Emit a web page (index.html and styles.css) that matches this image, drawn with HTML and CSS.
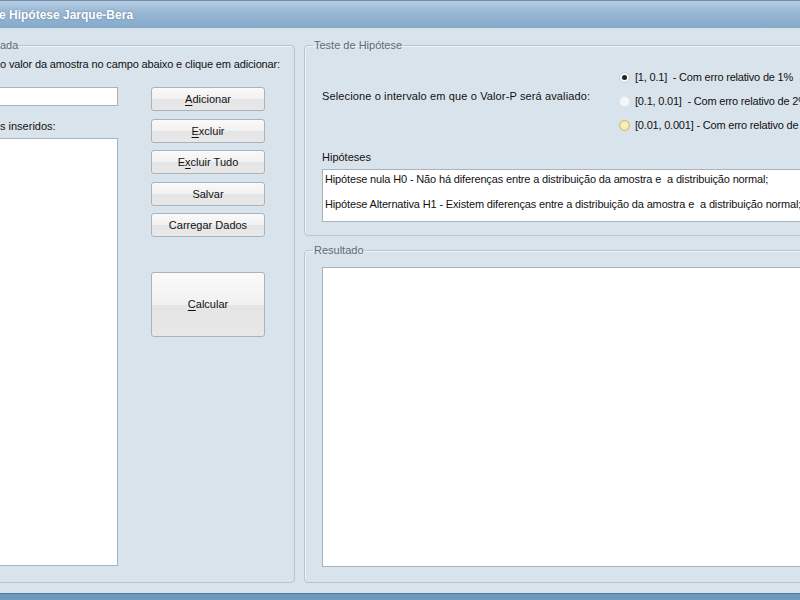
FILE: index.html
```html
<!DOCTYPE html>
<html lang="pt">
<head>
<meta charset="utf-8">
<title>Teste de Hipótese Jarque-Bera</title>
<link rel="stylesheet" href="styles.css">
</head>
<body>
<div class="window">
  <div class="titlebar"><span class="title">e Hipótese Jarque-Bera</span></div>
  <div class="client">
    <fieldset class="group group-left">
      <legend>ada</legend>
      <p class="instr">o valor da amostra no campo abaixo e clique em adicionar:</p>
      <div class="left-body">
        <div class="col-inputs">
          <div class="textbox small"></div>
          <div class="lbl list-label">s inseridos:</div>
          <div class="listbox"></div>
        </div>
        <div class="col-buttons">
          <button class="btn"><u>A</u>dicionar</button>
          <button class="btn"><u>E</u>xcluir</button>
          <button class="btn">E<u>x</u>cluir Tudo</button>
          <button class="btn">Salvar</button>
          <button class="btn">Carregar Dados</button>
          <button class="btn big"><u>C</u>alcular</button>
        </div>
      </div>
    </fieldset>
    <div class="col-right">
      <fieldset class="group group-test">
        <legend>Teste de Hipótese</legend>
        <div class="interval-row">
          <div class="interval-label">Selecione o intervalo em que o Valor-P será avaliado:</div>
          <div class="radios">
            <div class="radio-row"><span class="radio checked"></span><span>[1, 0.1]&nbsp; - Com erro relativo de 1%</span></div>
            <div class="radio-row"><span class="radio faint"></span><span>[0.1, 0.01]&nbsp; - Com erro relativo de 2%</span></div>
            <div class="radio-row"><span class="radio hover"></span><span>[0.01, 0.001] - Com erro relativo de 3%</span></div>
          </div>
        </div>
        <div class="lbl hyp-label">Hipóteses</div>
        <div class="textbox hyp">
          <p>Hipótese nula H0 - Não há diferenças entre a distribuição da amostra e&nbsp; a distribuição normal;</p>
          <p>Hipótese Alternativa H1 - Existem diferenças entre a distribuição da amostra e&nbsp; a distribuição normal;</p>
        </div>
      </fieldset>
      <fieldset class="group group-result">
        <legend>Resultado</legend>
        <div class="textbox result"></div>
      </fieldset>
    </div>
  </div>
  <div class="statusbar"></div>
</div>
</body>
</html>
```

FILE: styles.css
```css
html, body {
  margin: 0;
  padding: 0;
  width: 800px;
  height: 600px;
  overflow: hidden;
}
body {
  font-family: "Liberation Sans", Arial, sans-serif;
  font-size: 11px;
  color: #111;
  background: #d9e3ec;
}
.window {
  display: flex;
  flex-direction: column;
  width: 800px;
  height: 600px;
}
.titlebar {
  height: 27px;
  border-top: 1px solid #6d8fae;
  background: linear-gradient(#b6cde2 0%, #9ab9d4 40%, #84a9c9 100%);
  display: flex;
  align-items: center;
  flex-shrink: 0;
}
.title {
  color: #fff;
  font-weight: bold;
  font-size: 12px;
  text-shadow: 0 0 2px #5d7f9e;
  margin-left: -1px;
}
.client {
  flex: 1;
  display: flex;
  gap: 9px;
  padding: 11px 0 10px 0;
  margin-left: -10px;
  min-height: 0;
}
.statusbar {
  height: 6px;
  border-top: 1px solid #52799d;
  background: #6d9bc0;
  flex-shrink: 0;
}
.group {
  margin: 0;
  border: 1px solid #b5c5d1;
  border-radius: 4px;
  box-shadow: inset 1px 1px 0 #eef3f7;
  min-width: 0;
  flex-shrink: 0;
}
.group legend {
  padding: 0 1px;
  margin-left: -9px;
  color: #5d6b78;
  line-height: 13px;
}
.group-left {
  width: 305px;
  box-sizing: border-box;
  padding: 6px 0 16px 9px;
  display: flex;
  flex-direction: column;
}
.group-left legend {
  margin-left: 0;
  padding: 0;
}
.instr {
  margin: 0;
  line-height: 13px;
  white-space: nowrap;
  letter-spacing: -0.14px;
}
.left-body {
  flex: 1;
  display: flex;
  gap: 33px;
  margin-top: 16px;
  margin-left: -9px;
  min-height: 0;
}
.col-inputs {
  width: 127px;
  display: flex;
  flex-direction: column;
}
.textbox {
  background: #fff;
  border: 1px solid #a9b3bb;
  box-sizing: border-box;
}
.small {
  height: 19px;
}
.lbl {
  line-height: 13px;
  padding-left: 9px;
}
.list-label {
  margin-top: 14px;
  margin-bottom: 5px;
}
.listbox {
  flex: 1;
  background: #fff;
  border: 1px solid #a9b3bb;
}
.col-buttons {
  width: 114px;
  display: flex;
  flex-direction: column;
  gap: 7.5px;
}
.btn {
  font: inherit;
  color: #111;
  height: 24px;
  border: 1px solid #aab3bb;
  border-radius: 3px;
  background: linear-gradient(#fafafa 0%, #f1f1f1 50%, #e5e5e5 51%, #e8e8e8 100%);
  padding: 0;
}
.btn u {
  text-underline-offset: 2px;
}
.btn.big {
  height: 65px;
  margin-top: 27px;
}
.col-right {
  width: 510px;
  flex-shrink: 0;
  display: flex;
  flex-direction: column;
  gap: 8px;
}
.group-test {
  padding: 18px 0 13px 17px;
}
.interval-row {
  display: flex;
  align-items: flex-start;
}
.interval-label {
  width: 297px;
  line-height: 13px;
  margin-top: 20px;
  letter-spacing: 0.13px;
  white-space: nowrap;
  flex-shrink: 0;
}
.radios {
  display: flex;
  flex-direction: column;
  gap: 9px;
}
.radio-row {
  display: flex;
  align-items: center;
  gap: 5px;
  white-space: nowrap;
  line-height: 15px;
  letter-spacing: -0.2px;
}
.radio {
  width: 11px;
  height: 11px;
  border-radius: 50%;
  box-sizing: border-box;
  display: flex;
  align-items: center;
  justify-content: center;
  flex-shrink: 0;
}
.radio.checked {
  border: 1px solid #c9cfd4;
  background: radial-gradient(#ffffff, #f1f3f5);
}
.radio.checked::after {
  content: "";
  width: 5px;
  height: 5px;
  border-radius: 50%;
  background: #222;
}
.radio.faint {
  border: 1px solid #e6eaee;
  background: #f4f6f8;
}
.radio.hover {
  border: 1px solid #c9b868;
  background: radial-gradient(#fbf3c4, #f2e39a);
}
.hyp-label {
  padding-left: 0;
  margin-top: 18px;
  margin-bottom: 5px;
}
.hyp {
  width: 490px;
  height: 53px;
  padding: 3px 2px;
}
.hyp p {
  margin: 0 0 12px 0;
  line-height: 13px;
  white-space: nowrap;
  letter-spacing: -0.15px;
}
.group-result {
  flex: 1;
  padding: 10px 0 15px 17px;
  display: flex;
  flex-direction: column;
}
.result {
  flex: 1;
  width: 490px;
}
```
